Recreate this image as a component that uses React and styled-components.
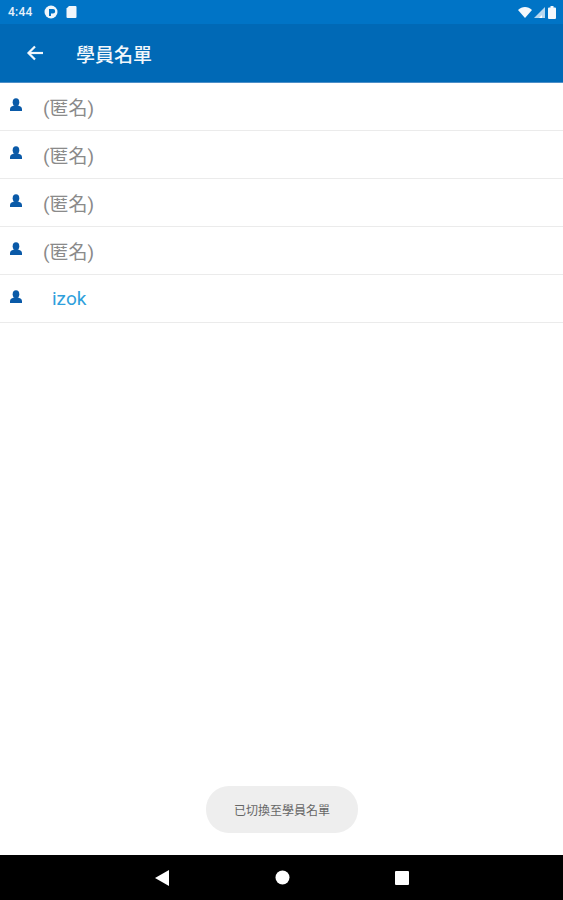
import React from "react";
import styled, { createGlobalStyle } from "styled-components";

const GlobalStyle = createGlobalStyle`
  html, body {
    margin: 0;
    padding: 0;
    background: #fff;
    font-family: "Roboto", "Noto Sans CJK TC", sans-serif;
  }
`;

const Page = styled.div`
  position: relative;
  width: 563px;
  height: 900px;
  display: flex;
  flex-direction: column;
  overflow: hidden;
`;

const StatusBar = styled.div`
  height: 24px;
  flex: none;
  background: #0074c6;
  display: flex;
  align-items: center;
  justify-content: space-between;
  padding: 0 7px 0 8px;
  color: #e6f1fa;
`;

const StatusGroup = styled.div`
  display: flex;
  align-items: center;
  gap: ${(p) => p.$gap || 0}px;
`;

const Clock = styled.span`
  font-size: 12px;
  font-weight: 500;
  width: 27px;
  margin-right: 9px;
  letter-spacing: 0.2px;
`;

const AppBar = styled.header`
  height: 58px;
  flex: none;
  background: #0069b6;
  border-bottom: 1px solid #4d8fc8;
  display: flex;
  align-items: center;
  color: #f2f7fb;
`;

const BackButton = styled.div`
  width: 76px;
  padding-left: 26px;
  box-sizing: border-box;
  display: flex;
  align-items: center;
`;

const Title = styled.h1`
  margin: 0;
  font-size: 19px;
  font-weight: 500;
  font-family: "Noto Sans CJK TC", sans-serif;
`;

const List = styled.ul`
  list-style: none;
  margin: 0;
  padding: 0;
  flex: 1;
`;

const Row = styled.li`
  height: 47px;
  border-bottom: 1px solid #ebebeb;
  display: flex;
  align-items: center;
  padding-left: 9px;
`;

const RowIcon = styled.span`
  width: 14px;
  height: 14px;
  margin-top: -4px;
  display: flex;
`;

const Name = styled.span`
  margin-left: ${(p) => (p.$anonymous ? 20 : 29)}px;
  font-size: 19px;
  font-family: "Roboto", "Noto Sans CJK TC", sans-serif;
  color: ${(p) => (p.$anonymous ? "#8a8a8a" : "#2f9fdc")};
`;

const Toast = styled.div`
  position: absolute;
  left: 206px;
  top: 786px;
  width: 152px;
  height: 47px;
  border-radius: 23px;
  background: #eeeeee;
  color: #666;
  font-size: 12px;
  font-family: "Noto Sans CJK TC", sans-serif;
  display: flex;
  align-items: center;
  justify-content: center;
`;

const NavBar = styled.nav`
  height: 45px;
  flex: none;
  background: #000;
  display: flex;
  align-items: center;
  justify-content: space-between;
  padding: 0 154px 0 155px;
`;

const PersonIcon = () => (
  <svg width="14" height="14" viewBox="0 0 14 14" fill="#0a5aa8">
    <ellipse cx="7" cy="4.2" rx="3.3" ry="3.9" />
    <path d="M1 13 V11 C1 9 3.6 8 5 7.6 H9 C10.4 8 13 9 13 11 V13 Z" />
  </svg>
);

const names = ["(匿名)", "(匿名)", "(匿名)", "(匿名)", "izok"];

export default function App() {
  return (
    <Page>
      <GlobalStyle />
      <StatusBar>
        <StatusGroup>
          <Clock>4:44</Clock>
          <svg width="14" height="14" viewBox="0 0 14 14" style={{ marginRight: 8 }}>
            <circle cx="7" cy="7" r="6.5" fill="#f0f6fb" />
            <path d="M5 11 V4 H9 A2.2 2.2 0 0 1 9 8.4 H7 V11 Z" fill="#0074c6" />
          </svg>
          <svg width="11" height="12" viewBox="0 0 11 12" fill="#f0f6fb">
            <path d="M3 0 H9.5 A1 1 0 0 1 10.5 1 V11 A1 1 0 0 1 9.5 12 H1.5 A1 1 0 0 1 0.5 11 V2.5 Z" />
          </svg>
        </StatusGroup>
        <StatusGroup $gap={2}>
          <svg width="14" height="11" viewBox="0 0 14 11" fill="#f4f8fc">
            <path d="M0 3 C4 -1 10 -1 14 3 L7 11 Z" />
          </svg>
          <svg width="11" height="11" viewBox="0 0 11 11">
            <path d="M0 11 L11 0 V11 Z" fill="#f4f8fc" opacity="0.75" />
            <path d="M5 11 L8 8 V11 Z" fill="#fff" />
          </svg>
          <svg width="8" height="13" viewBox="0 0 8 13" fill="#f4f8fc" style={{ marginLeft: 1 }}>
            <path d="M2.5 0 H5.5 V1.5 H7 A1 1 0 0 1 8 2.5 V12 A1 1 0 0 1 7 13 H1 A1 1 0 0 1 0 12 V2.5 A1 1 0 0 1 1 1.5 H2.5 Z" />
          </svg>
        </StatusGroup>
      </StatusBar>
      <AppBar>
        <BackButton>
          <svg width="18" height="16" viewBox="0 0 18 16" fill="none" stroke="currentColor" strokeWidth="2.2">
            <path d="M17 8 H3" />
            <path d="M9 1.5 L2.5 8 L9 14.5" />
          </svg>
        </BackButton>
        <Title>學員名單</Title>
      </AppBar>
      <List>
        {names.map((name, i) => (
          <Row key={i}>
            <RowIcon>
              <PersonIcon />
            </RowIcon>
            <Name $anonymous={name !== "izok"}>{name}</Name>
          </Row>
        ))}
      </List>
      <Toast>已切換至學員名單</Toast>
      <NavBar>
        <svg width="14" height="16" viewBox="0 0 14 16" fill="#fff">
          <path d="M14 0 V16 L0 8 Z" />
        </svg>
        <svg width="15" height="15" viewBox="0 0 15 15" fill="#fff">
          <circle cx="7.5" cy="7.5" r="7" />
        </svg>
        <svg width="14" height="14" viewBox="0 0 14 14" fill="#fff">
          <rect width="14" height="14" rx="1" />
        </svg>
      </NavBar>
    </Page>
  );
}
